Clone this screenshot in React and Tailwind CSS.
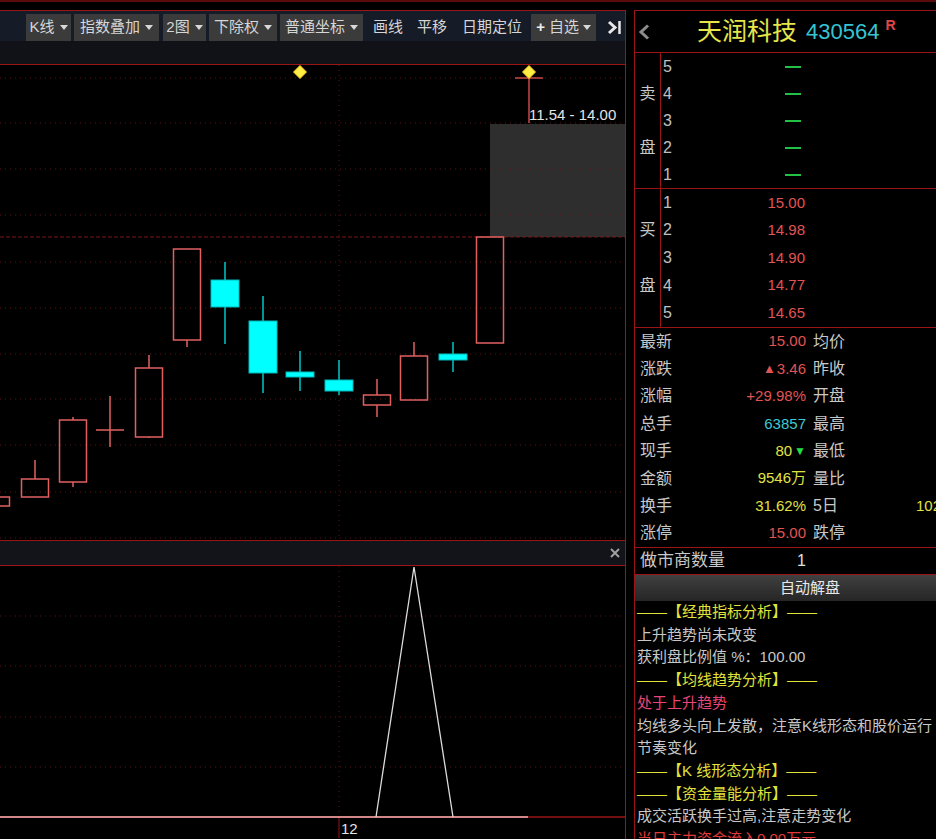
import React from 'react';

const RED = '#e06060';
const CYAN = '#00ffff';

const candles = [
  { c: -4, top: 498, bot: 507, hi: 498, lo: 507, up: true },
  { c: 35, top: 480, bot: 498, hi: 461, lo: 498, up: true },
  { c: 73, top: 421, bot: 483, hi: 418, lo: 488, up: true },
  { c: 110, top: 431, bot: 431, hi: 397, lo: 448, up: true },
  { c: 149, top: 369, bot: 438, hi: 356, lo: 439, up: true },
  { c: 187, top: 250, bot: 341, hi: 250, lo: 348, up: true },
  { c: 225, top: 281, bot: 308, hi: 263, lo: 345, up: false },
  { c: 263, top: 322, bot: 374, hi: 297, lo: 394, up: false },
  { c: 300, top: 373, bot: 378, hi: 352, lo: 392, up: false },
  { c: 339, top: 381, bot: 392, hi: 361, lo: 396, up: false },
  { c: 377, top: 396, bot: 406, hi: 380, lo: 418, up: true },
  { c: 414, top: 357, bot: 401, hi: 343, lo: 401, up: true },
  { c: 453, top: 355, bot: 361, hi: 343, lo: 373, up: false },
  { c: 490, top: 238, bot: 344, hi: 238, lo: 344, up: true },
];

const Caret = () => (
  <svg width="8" height="5" viewBox="0 0 8 5">
    <path d="M0 0 H8 L4 5 Z" fill="#d8d8d8" />
  </svg>
);

const Btn = ({ w, children, caret = true }) => (
  <div
    className={`h-[27px] ${w} bg-[#3b3b3b] flex items-center justify-center gap-[5px] text-[15px] text-[#d6d6d6]`}
  >
    <span>{children}</span>
    {caret && <Caret />}
  </div>
);

const Candle = ({ c, top, bot, hi, lo, up }) => {
  const y = (v) => v - 66;
  if (top === bot) {
    return (
      <g stroke={RED} strokeWidth="1.5">
        <line x1={c} x2={c} y1={y(hi)} y2={y(lo)} />
        <line x1={c - 14} x2={c + 14} y1={y(top)} y2={y(top)} />
      </g>
    );
  }
  if (up) {
    return (
      <g stroke={RED} strokeWidth="1.5" fill="none">
        {hi < top && <line x1={c} x2={c} y1={y(hi)} y2={y(top)} />}
        {lo > bot && <line x1={c} x2={c} y1={y(bot)} y2={y(lo)} />}
        <rect x={c - 13.5} y={y(top)} width="27" height={bot - top} />
      </g>
    );
  }
  return (
    <g>
      <line x1={c} x2={c} y1={y(hi)} y2={y(lo)} stroke="#00c8c8" strokeWidth="1.5" />
      <rect x={c - 14} y={y(top)} width="28" height={bot - top} fill={CYAN} stroke="#00b8b8" strokeWidth="1" />
    </g>
  );
};

const Diamond = ({ x, y }) => (
  <polygon
    points={`${x},${y - 6.5} ${x + 6.5},${y} ${x},${y + 6.5} ${x - 6.5},${y}`}
    fill="#ffee44"
    stroke="#ffcc22"
    strokeWidth="1"
  />
);

const MainChart = () => {
  const grid = [13, 58, 104, 150, 197, 243, 289, 334, 380, 427, 473];
  return (
    <svg width="625" height="475" className="block">
      <rect x="490" y="59" width="135" height="113" fill="#2e2e2e" />
      {grid.map((g) => (
        <line key={g} x1="0" x2="625" y1={g} y2={g} stroke="#5c1212" strokeDasharray="1 4" />
      ))}
      <line x1="0" x2="625" y1="172" y2="172" stroke="#7a1616" strokeDasharray="4 2" />
      <line x1="339" x2="339" y1="0" y2="475" stroke="#5c1212" strokeDasharray="1 4" />
      {candles.map((k, i) => (
        <Candle key={i} {...k} />
      ))}
      <g stroke="#c84848" strokeWidth="1.5">
        <line x1="515" x2="543" y1="13" y2="13" />
        <line x1="529" x2="529" y1="13" y2="58" />
      </g>
      <Diamond x={300} y={7} />
      <Diamond x={529} y={7} />
      <text
        x="529"
        y="55"
        fill="#e4e4e4"
        fontSize="15"
        fontFamily="Liberation Sans, sans-serif"
      >
        11.54 - 14.00
      </text>
    </svg>
  );
};

const SubChart = () => {
  const grid = [50, 100, 151, 201];
  return (
    <svg width="625" height="272" className="block">
      {grid.map((g) => (
        <line key={g} x1="0" x2="625" y1={g} y2={g} stroke="#5c1212" strokeDasharray="1 4" />
      ))}
      <line x1="339" x2="339" y1="0" y2="251" stroke="#5c1212" strokeDasharray="1 4" />
      <line x1="339" x2="339" y1="251" y2="272" stroke="#9a1515" strokeWidth="1" />
      <line x1="0" x2="625" y1="251" y2="251" stroke="#9a1515" strokeWidth="1.5" />
      <line x1="0" x2="528" y1="251" y2="251" stroke="#f0b0b0" strokeWidth="1.5" />
      <polyline points="376,251 414,1 453,251" fill="none" stroke="#dcdcdc" strokeWidth="1.3" />
      <text x="341" y="268" fill="#e4e4e4" fontSize="15" fontFamily="Liberation Sans, sans-serif">
        12
      </text>
    </svg>
  );
};

const clr = {
  red: 'text-[#e05454]',
  cyan: 'text-[#3ec8d4]',
  yellow: 'text-[#e2e244]',
};

const stats = [
  { l: '最新', v: '15.00', c: 'red', l2: '均价' },
  { l: '涨跌', v: '3.46', c: 'red', l2: '昨收', up: true },
  { l: '涨幅', v: '+29.98%', c: 'red', l2: '开盘' },
  { l: '总手', v: '63857', c: 'cyan', l2: '最高' },
  { l: '现手', v: '80', c: 'yellow', l2: '最低', down: true },
  { l: '金额', v: '9546万', c: 'yellow', l2: '量比' },
  { l: '换手', v: '31.62%', c: 'yellow', l2: '5日', v2: '102' },
  { l: '涨停', v: '15.00', c: 'red', l2: '跌停' },
];

const buys = ['15.00', '14.98', '14.90', '14.77', '14.65'];

const SideBook = ({ h, label1, label2, rows }) => (
  <div className={`flex ${h} border-b border-[#9a1515]`}>
    <div className="w-[26px] border-r border-[#9a1515] flex flex-col text-[16px] text-[#c8c8c8]">
      {[0, 1, 2, 3, 4].map((i) => (
        <div key={i} className="flex-1 flex items-center justify-center">
          {i === 1 ? label1 : i === 3 ? label2 : ''}
        </div>
      ))}
    </div>
    <div className="flex-1 flex flex-col">
      {rows.map((r) => (
        <div key={r.n} className="flex-1 flex items-center">
          <span className="w-[20px] pl-[2px] text-[16px] text-[#c0c0c0]">{r.n}</span>
          {r.dash ? (
            <span className="w-[124px] flex justify-end pr-[4px]">
              <span className="w-[16px] h-[2px] bg-[#22c044]" />
            </span>
          ) : (
            <span className="w-[124px] text-right text-[15px] text-[#e05454]">{r.v}</span>
          )}
        </div>
      ))}
    </div>
  </div>
);

const analysis = [
  { t: '——【经典指标分析】——', c: 'text-[#e2e23a]' },
  { t: '上升趋势尚未改变', c: 'text-[#c8c8c8]' },
  { t: '获利盘比例值 %：100.00', c: 'text-[#c8c8c8]' },
  { t: '——【均线趋势分析】——', c: 'text-[#e2e23a]' },
  { t: '处于上升趋势', c: 'text-[#e8467a]' },
  { t: '均线多头向上发散，注意K线形态和股价运行', c: 'text-[#c8c8c8]' },
  { t: '节奏变化', c: 'text-[#c8c8c8]' },
  { t: '——【K 线形态分析】——', c: 'text-[#e2e23a]' },
  { t: '——【资金量能分析】——', c: 'text-[#e2e23a]' },
  { t: '成交活跃换手过高,注意走势变化', c: 'text-[#c8c8c8]' },
  { t: '当日主力资金流入0.00万元', c: 'text-[#e03a3a]' },
];

export default function App() {
  return (
    <div className="w-[936px] h-[839px] bg-black overflow-hidden flex flex-col font-['Liberation_Sans','Noto_Sans_CJK_SC',sans-serif]">
      <div className="h-[10px] border-t-2 border-[#5a0c0c]" />
      <div className="flex flex-1 min-h-0">
        {/* left: chart */}
        <div className="w-[626px] flex flex-col border-t border-r border-[#9a1515]">
          <div className="h-[30px] bg-[#161b28] flex items-end pl-[26px]">
            <Btn w="w-[45px]">K线</Btn>
            <div className="ml-[3px]"><Btn w="w-[85px]">指数叠加</Btn></div>
            <div className="ml-[4px]"><Btn w="w-[43px]">2图</Btn></div>
            <div className="ml-[3px]"><Btn w="w-[68px]">下除权</Btn></div>
            <div className="ml-[3px]"><Btn w="w-[83px]">普通坐标</Btn></div>
            <span className="ml-[10px] h-[27px] flex items-center text-[15px] text-[#d6d6d6]">画线</span>
            <span className="ml-[14px] h-[27px] flex items-center text-[15px] text-[#d6d6d6]">平移</span>
            <span className="ml-[15px] h-[27px] flex items-center text-[15px] text-[#d6d6d6]">日期定位</span>
            <div className="ml-[9px] h-[27px] w-[65px] bg-[#3b3b3b] flex items-center justify-center gap-[4px] text-[15px] text-[#d6d6d6]">
              <span className="font-bold text-[#eee]">+</span>
              <span>自选</span>
              <Caret />
            </div>
            <div className="ml-[11px] h-[27px] flex items-center">
              <svg width="15" height="15" viewBox="0 0 15 15">
                <path d="M2 2 L8 7.5 L2 13" fill="none" stroke="#e8e8e8" strokeWidth="3" />
                <line x1="12.5" x2="12.5" y1="1" y2="14" stroke="#e8e8e8" strokeWidth="2.5" />
              </svg>
            </div>
          </div>
          <div className="h-[24px] bg-[#111217] border-b border-[#9a1515]" />
          <MainChart />
          <div className="h-[26px] bg-[#131419] border-y border-[#9a1515] flex items-center justify-end pr-[5px]">
            <svg width="10" height="10" viewBox="0 0 10 10">
              <path d="M1 1 L9 9 M9 1 L1 9" stroke="#a0a0a0" strokeWidth="2" />
            </svg>
          </div>
          <SubChart />
        </div>

        <div className="w-[8px]" />

        {/* right: quote panel */}
        <div className="w-[302px] overflow-hidden border-t border-l border-[#9a1515]">
          <div className="w-[350px] flex flex-col">
            <div className="h-[42px] border-b border-[#9a1515] flex items-center pl-[3px]">
              <svg width="12" height="16" viewBox="0 0 12 16">
                <path d="M10 1.5 L3 8 L10 14.5" fill="none" stroke="#8c8c8c" strokeWidth="3" />
              </svg>
              <span className="ml-[47px] text-[25px] leading-none text-[#e6e64a]">天润科技</span>
              <span className="ml-[9px] text-[22px] leading-none text-[#36c4d2]">430564</span>
              <span className="ml-[6px] self-start mt-[4px] text-[14px] font-bold text-[#e04848]">R</span>
            </div>

            <SideBook
              h="h-[136px]"
              label1="卖"
              label2="盘"
              rows={[5, 4, 3, 2, 1].map((n) => ({ n, dash: true }))}
            />
            <SideBook
              h="h-[139px]"
              label1="买"
              label2="盘"
              rows={buys.map((v, i) => ({ n: i + 1, v }))}
            />

            <div className="h-[220px] border-b border-[#9a1515] flex flex-col">
              {stats.map((s) => (
                <div key={s.l} className="flex-1 flex items-center">
                  <div className="w-[171px] flex items-center justify-between pl-[5px]">
                    <span className="text-[16px] text-[#c8c8c8]">{s.l}</span>
                    <span className={`text-[15px] ${clr[s.c]} flex items-center`}>
                      {s.up && <span className="text-[13px] mr-[1px]">▲</span>}
                      {s.v}
                      {s.down && <span className="text-[12px] ml-[2px] text-[#22dd44]">▼</span>}
                    </span>
                  </div>
                  <span className="ml-[7px] w-[103px] text-[16px] text-[#c8c8c8]">{s.l2}</span>
                  {s.v2 && <span className="text-[15px] text-[#e2e244]">{s.v2}</span>}
                </div>
              ))}
            </div>

            <div className="h-[27px] border-b border-[#9a1515] flex items-center pl-[5px]">
              <span className="w-[157px] text-[17px] text-[#c8c8c8]">做市商数量</span>
              <span className="text-[16px] text-[#e0e0e0]">1</span>
            </div>

            <div className="h-[26px] bg-gradient-to-b from-[#404040] to-[#262626] flex items-center justify-center text-[15px] text-[#e8e8e8]">
              自动解盘
            </div>

            <div className="pl-[2px] text-[15px] leading-[22.7px]">
              {analysis.map((a, i) => (
                <div key={i} className={`whitespace-nowrap ${a.c}`}>
                  {a.t}
                </div>
              ))}
            </div>
          </div>
        </div>
      </div>
    </div>
  );
}
